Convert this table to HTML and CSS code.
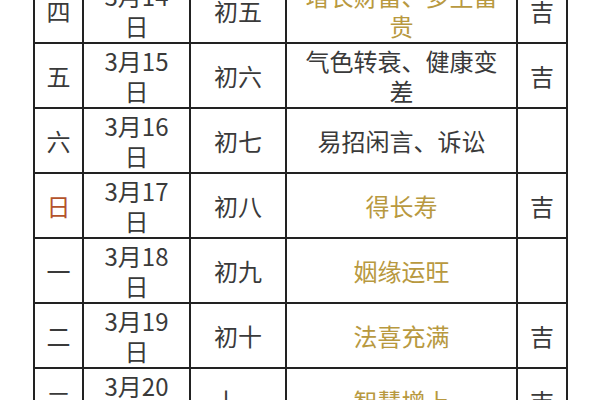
FILE: index.html
```html
<!DOCTYPE html>
<html lang="zh">
<head>
<meta charset="utf-8">
<link rel="stylesheet" href="styles.css">
</head>
<body>
<table class="cal">
  <colgroup>
    <col class="c-week"><col class="c-date"><col class="c-lunar"><col class="c-desc"><col class="c-luck">
  </colgroup>
  <tbody>
    <tr><td>四</td><td>3月14<br>日</td><td>初五</td><td class="gold">增长财富、多生富<br>贵</td><td>吉</td></tr>
    <tr><td>五</td><td>3月15<br>日</td><td>初六</td><td>气色转衰、健康变<br>差</td><td>吉</td></tr>
    <tr><td>六</td><td>3月16<br>日</td><td>初七</td><td>易招闲言、诉讼</td><td></td></tr>
    <tr><td class="sun">日</td><td>3月17<br>日</td><td>初八</td><td class="gold">得长寿</td><td>吉</td></tr>
    <tr><td>一</td><td>3月18<br>日</td><td>初九</td><td class="gold">姻缘运旺</td><td></td></tr>
    <tr><td>二</td><td>3月19<br>日</td><td>初十</td><td class="gold">法喜充满</td><td>吉</td></tr>
    <tr><td>三</td><td>3月20<br>日</td><td>十一</td><td class="gold">智慧增上</td><td>吉</td></tr>
  </tbody>
</table>
</body>
</html>
```
FILE: styles.css
```css
html, body {
  margin: 0;
  padding: 0;
  background: #ffffff;
  overflow: hidden;
}
body {
  font-family: "Noto Sans CJK SC", "Noto Sans", sans-serif;
  color: #3a3a3a;
}
.cal {
  margin: -23px 0 0 33px;
  border-collapse: separate;
  border-spacing: 2px;
  background: #222222;
  table-layout: fixed;
  width: 535px;
}
.c-week { width: 47px; }
.c-date { width: 105px; }
.c-lunar { width: 94px; }
.c-desc { width: 229px; }
.c-luck { width: 48px; }
.cal td {
  background: #ffffff;
  height: 63px;
  padding: 0;
  text-align: center;
  vertical-align: middle;
  font-size: 24px;
  line-height: 30px;
}
.cal td.gold { color: #b8993f; }
.cal td.sun { color: #b4532c; }
```
